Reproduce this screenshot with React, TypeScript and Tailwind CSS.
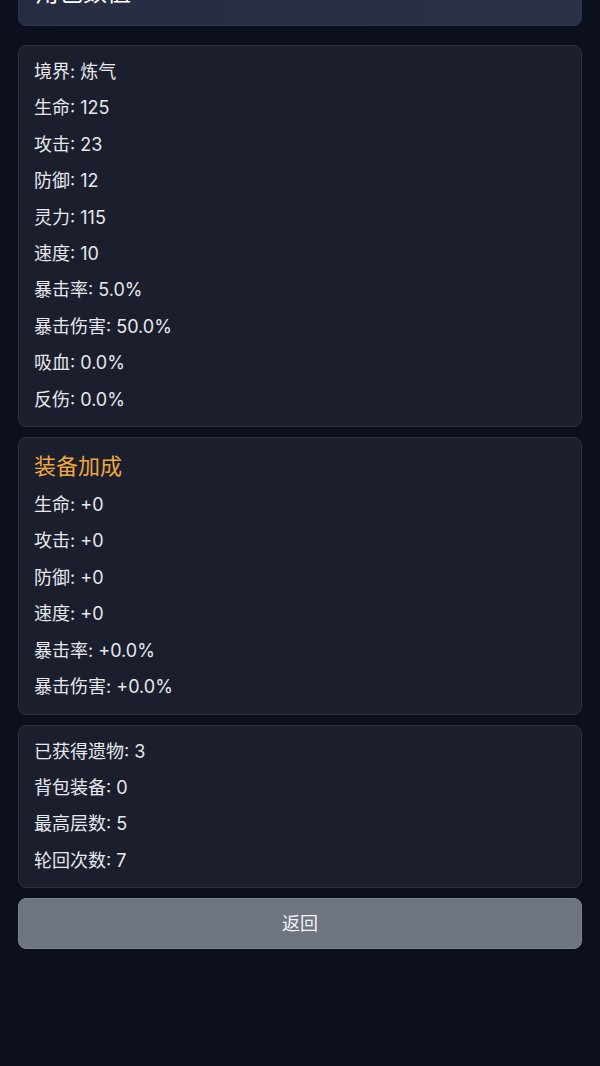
const font = { fontFamily: 'Inter, "Noto Sans CJK SC", sans-serif' };

const baseStats = [
  '境界: 炼气',
  '生命: 125',
  '攻击: 23',
  '防御: 12',
  '灵力: 115',
  '速度: 10',
  '暴击率: 5.0%',
  '暴击伤害: 50.0%',
  '吸血: 0.0%',
  '反伤: 0.0%',
];

const equipBonus = ['生命: +0', '攻击: +0', '防御: +0', '速度: +0', '暴击率: +0.0%', '暴击伤害: +0.0%'];

const progress = ['已获得遗物: 3', '背包装备: 0', '最高层数: 5', '轮回次数: 7'];

const StatLine = ({ text }: { text: string }) => (
  <p className="text-lg leading-[28.4px] text-[#e6e8ee]">{text}</p>
);

const Card = ({ children }: { children: React.ReactNode }) => (
  <div className="mb-[10px] rounded-lg border border-[#2a3041] bg-[#1b1f2d] px-[15px] py-3">
    <div className="space-y-2">{children}</div>
  </div>
);

export default function App() {
  return (
    <div className="min-h-screen overflow-hidden bg-[#0c101e]" style={font}>
      <div className="-mt-[40px] px-[18px]">
        <div className="mb-[19px] rounded-lg border border-[#2f3750] bg-gradient-to-r from-[#262d42] to-[#2a3148] px-4 py-4">
          <h1 className="text-2xl leading-8 text-white">角色数值</h1>
        </div>

        <Card>
          {baseStats.map(s => (
            <StatLine key={s} text={s} />
          ))}
        </Card>

        <Card>
          <h2 className="text-[22px] leading-[33px] text-[#f0a73e]">装备加成</h2>
          {equipBonus.map(s => (
            <StatLine key={s} text={s} />
          ))}
        </Card>

        <Card>
          {progress.map(s => (
            <StatLine key={s} text={s} />
          ))}
        </Card>

        <button className="h-[51px] w-full rounded-lg border border-[#7b828d] bg-[#6e7581] text-lg text-[#f1f3f6]">
          返回
        </button>
      </div>
    </div>
  );
}
